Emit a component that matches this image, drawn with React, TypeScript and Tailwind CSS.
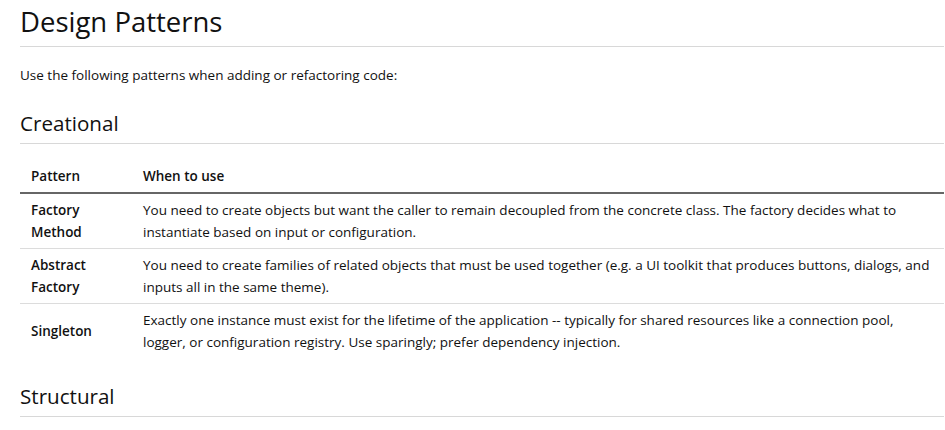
import React from "react";

const rows = [
  {
    name: ["Factory", "Method"],
    text: "You need to create objects but want the caller to remain decoupled from the concrete class. The factory decides what to instantiate based on input or configuration.",
  },
  {
    name: ["Abstract", "Factory"],
    text: "You need to create families of related objects that must be used together (e.g. a UI toolkit that produces buttons, dialogs, and inputs all in the same theme).",
  },
  {
    name: ["Singleton"],
    text: "Exactly one instance must exist for the lifetime of the application -- typically for shared resources like a connection pool, logger, or configuration registry. Use sparingly; prefer dependency injection.",
  },
];

export default function App() {
  return (
    <div
      className="w-[945px] h-[430px] overflow-hidden bg-white pl-[20px] pr-[1px] text-[#111]"
      style={{ fontFamily: '"Open Sans", "Noto Sans", sans-serif' }}
    >
      <h1 className="pt-[5px] pb-[8px] text-[27.5px] leading-[33px] font-normal border-b border-[#d8d8d8]">
        Design Patterns
      </h1>
      <p className="mt-[17px] text-[13.5px] leading-[22px]">
        Use the following patterns when adding or refactoring code:
      </p>
      <h2 className="mt-[25px] pb-[7px] text-[20.6px] leading-[25px] font-normal border-b border-[#d8d8d8]">
        Creational
      </h2>
      <table className="mt-[16px] w-full border-collapse text-[13.5px] leading-[22px]">
        <thead>
          <tr className="border-b-2 border-[#666]">
            <th className="w-[123px] text-left font-semibold pl-[11px] pr-[11px] py-[5px]">Pattern</th>
            <th className="text-left font-semibold pl-[0px] pr-[11px] py-[5px]">When to use</th>
          </tr>
        </thead>
        <tbody>
          {rows.map((r, i) => (
            <tr key={i} className={i < rows.length - 1 ? "border-b border-[#dcdcdc]" : ""}>
              <td className="font-semibold pl-[11px] pr-[11px] py-[5px] align-middle">
                {r.name.map((n, j) => (
                  <div key={j}>{n}</div>
                ))}
              </td>
              <td className="pl-[0px] pr-[6px] py-[5px]">{r.text}</td>
            </tr>
          ))}
        </tbody>
      </table>
      <h2 className="mt-[26px] pb-[7px] text-[20.6px] leading-[25px] font-normal border-b border-[#d8d8d8]">
        Structural
      </h2>
    </div>
  );
}
